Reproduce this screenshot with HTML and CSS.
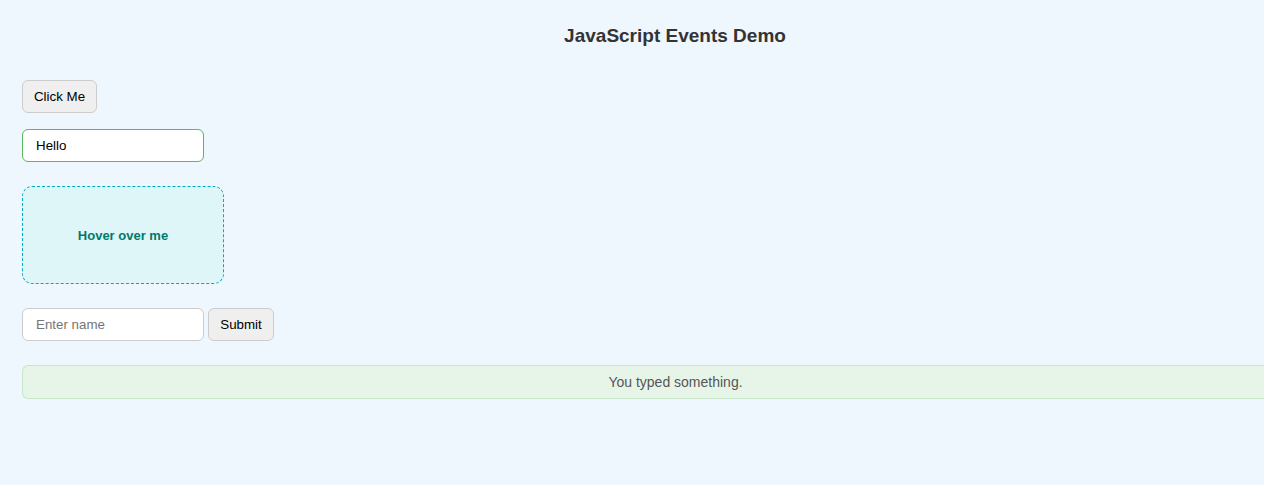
FILE: index.html
```html
<!DOCTYPE html>
<html lang="en">
<head>
<meta charset="utf-8">
<title>JavaScript Events Demo</title>
<link rel="stylesheet" href="styles.css">
</head>
<body>
<main class="page">
  <h1 class="title">JavaScript Events Demo</h1>
  <div class="stack">
    <button class="btn btn-click" type="button">Click Me</button>
    <input class="field field-active" type="text" value="Hello">
    <div class="hover-box">Hover over me</div>
    <form class="name-form">
      <input class="field" type="text" placeholder="Enter name">
      <button class="btn btn-submit" type="button">Submit</button>
    </form>
    <div class="output">You typed something.</div>
  </div>
</main>
</body>
</html>
```
FILE: styles.css
```css
html, body {
  margin: 0;
  padding: 0;
  overflow: hidden;
  background: #eef6fe;
}
body {
  font-family: "Liberation Sans", Arial, sans-serif;
  color: #333;
  height: 485px;
}
.page {
  width: 1242px;
  padding: 0 0 0 22px;
}
.title {
  margin: 0;
  padding: 25px 0 0 64px;
  height: 22px;
  line-height: 22px;
  font-size: 19px;
  font-weight: bold;
  text-align: center;
  color: #333;
}
.stack {
  display: flex;
  flex-direction: column;
  align-items: flex-start;
  padding-top: 33px;
}
.btn {
  box-sizing: border-box;
  height: 33px;
  padding: 0;
  white-space: nowrap;
  font-family: "Liberation Sans", Arial, sans-serif;
  font-size: 13.333px;
  color: #000;
  background: #efefef;
  border: 1px solid #cccccc;
  border-radius: 6px;
  cursor: pointer;
}
.btn-click {
  width: 75px;
}
.field {
  box-sizing: border-box;
  width: 182px;
  height: 33px;
  padding: 0 13px;
  font-family: "Liberation Sans", Arial, sans-serif;
  font-size: 13.333px;
  color: #000;
  background: #fff;
  border: 1px solid #cccccc;
  border-radius: 6px;
  outline: none;
}
.field::placeholder {
  color: #757575;
}
.field-active {
  margin-top: 16px;
  border-color: #5cb85c;
}
.hover-box {
  box-sizing: border-box;
  margin-top: 24px;
  width: 202px;
  height: 98px;
  display: flex;
  align-items: center;
  justify-content: center;
  background: #dff6f8;
  border: 1px dashed #00acc1;
  border-radius: 10px;
  color: #00796b;
  font-weight: bold;
  font-size: 13px;
}
.name-form {
  margin: 24px 0 0;
  display: flex;
  gap: 4px;
}
.btn-submit {
  width: 66px;
}
.output {
  box-sizing: border-box;
  margin-top: 24px;
  width: 1242px;
  height: 34px;
  padding-left: 64px;
  display: flex;
  align-items: center;
  justify-content: center;
  background: #e7f5e8;
  border: 1px solid #c8e6c9;
  border-right: none;
  border-radius: 6px 0 0 6px;
  color: #555;
  font-size: 14px;
}
```
